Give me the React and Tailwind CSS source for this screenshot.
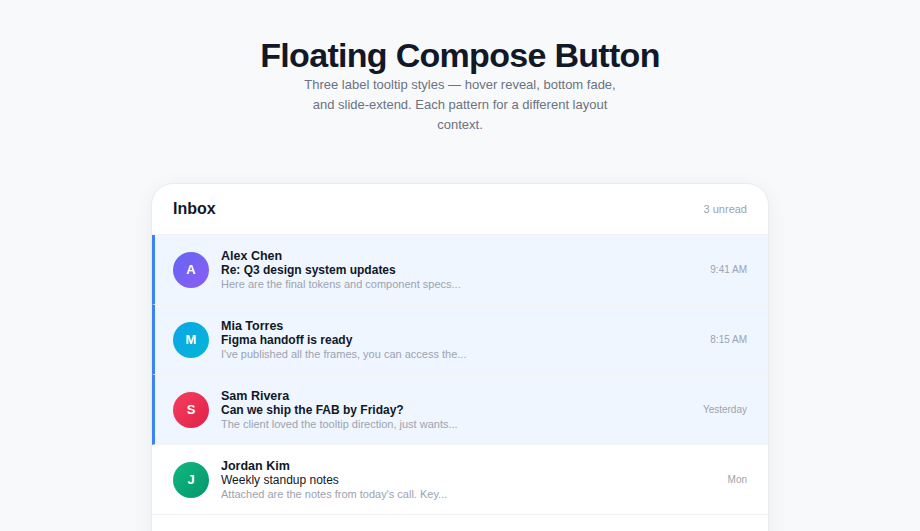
import React from "react";

const rows = [
  { name: "Alex Chen", subject: "Re: Q3 design system updates", preview: "Here are the final tokens and component specs...", time: "9:41 AM", initial: "A", grad: "bg-gradient-to-br from-[#6366f1] to-[#8b5cf6]", unread: true },
  { name: "Mia Torres", subject: "Figma handoff is ready", preview: "I've published all the frames, you can access the...", time: "8:15 AM", initial: "M", grad: "bg-gradient-to-br from-[#0ea5e9] to-[#06b6d4]", unread: true },
  { name: "Sam Rivera", subject: "Can we ship the FAB by Friday?", preview: "The client loved the tooltip direction, just wants...", time: "Yesterday", initial: "S", grad: "bg-gradient-to-br from-[#f43f5e] to-[#e11d48]", unread: true },
  { name: "Jordan Kim", subject: "Weekly standup notes", preview: "Attached are the notes from today's call. Key...", time: "Mon", initial: "J", grad: "bg-gradient-to-br from-[#10b981] to-[#059669]", unread: false },
  { name: "Lisa Park", subject: "Brand refresh moodboard", preview: "Sharing a few references for the new direction...", time: "Sun", initial: "L", grad: "bg-gradient-to-br from-[#f59e0b] to-[#d97706]", unread: false },
];

export default function App() {
  return (
    <div className="min-h-screen bg-[#f8f9fb] flex flex-col items-center pt-[35px] pb-10" style={{ fontFamily: '"Liberation Sans", Arial, sans-serif' }}>
      <h1 className="text-[34px] leading-[40px] font-bold text-[#111827] tracking-[-0.7px]">Floating Compose Button</h1>
      <p className="mt-0 max-w-[320px] text-center text-[13px] leading-[20px] text-[#6b7280]">
        Three label tooltip styles — hover reveal, bottom fade, and slide-extend. Each pattern for a different layout context.
      </p>
      <div className="mt-[48px] w-[618px] bg-white rounded-[22px] border border-[#e9ebef] shadow-[0_4px_20px_rgba(15,23,42,0.06)] overflow-hidden">
        <div className="flex items-center justify-between px-[21px] h-[51px] border-b border-[#f1f2f4]">
          <span className="text-[16px] font-bold text-[#111827]">Inbox</span>
          <span className="text-[11px] text-[#9ca3af]">3 unread</span>
        </div>
        {rows.map((r) => (
          <div
            key={r.name}
            className={`flex items-center h-[70px] pr-[21px] border-b border-[#f1f3f6] ${r.unread ? "bg-[#eff6ff] border-l-[3px] border-l-[#3b82f6] pl-[18px]" : "bg-white pl-[21px]"}`}
          >
            <div className={`w-[36px] h-[36px] rounded-full flex items-center justify-center text-white text-[13px] font-bold shrink-0 ${r.grad}`}>
              {r.initial}
            </div>
            <div className="ml-[12px] flex-1 min-w-0">
              <div className="text-[12.5px] leading-[14px] font-bold text-[#111827]">{r.name}</div>
              <div className={`text-[12px] leading-[14px] text-[#111827] ${r.unread ? "font-bold" : "font-normal"}`}>{r.subject}</div>
              <div className="text-[11px] leading-[14px] text-[#9ca3af] truncate">{r.preview}</div>
            </div>
            <span className="text-[10px] text-[#9ca3af] ml-4">{r.time}</span>
          </div>
        ))}
      </div>
    </div>
  );
}
